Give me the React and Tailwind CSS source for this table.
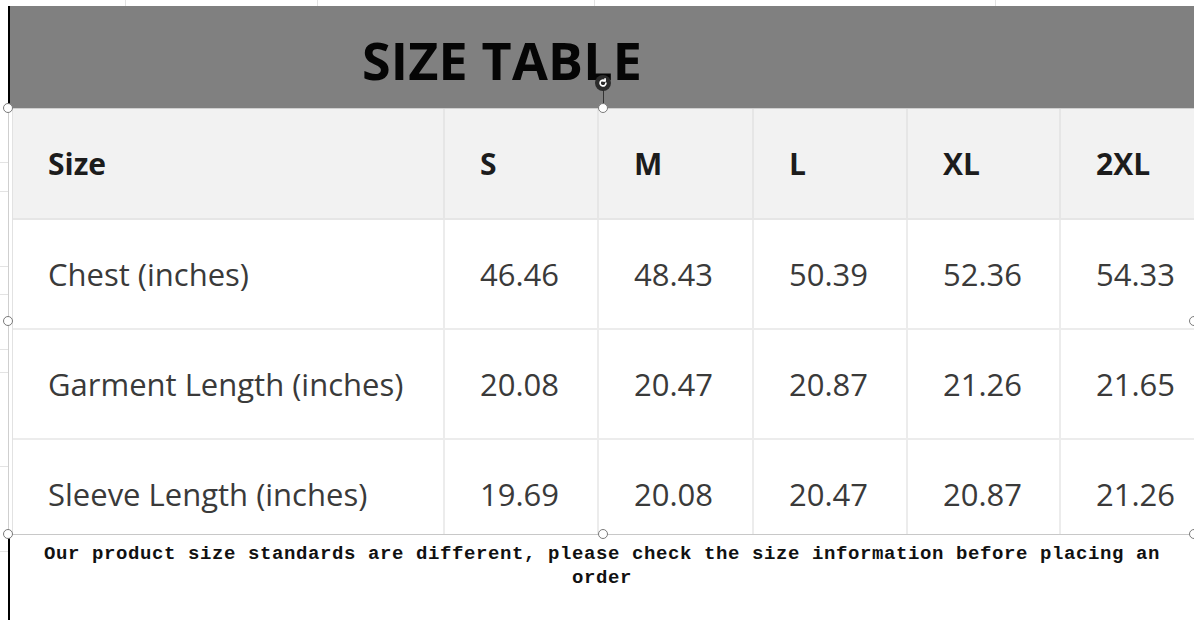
import { useState } from "react";

const columns = ["Size", "S", "M", "L", "XL", "2XL"];

const rows = [
  ["Chest (inches)", "46.46", "48.43", "50.39", "52.36", "54.33"],
  ["Garment Length (inches)", "20.08", "20.47", "20.87", "21.26", "21.65"],
  ["Sleeve Length (inches)", "19.69", "20.08", "20.47", "20.87", "21.26"],
];

const cellFont = { fontFamily: '"Open Sans", "Noto Sans", sans-serif' };

function Handle({ className }) {
  return (
    <span
      className={`absolute h-[10px] w-[10px] -translate-x-1/2 -translate-y-1/2 rounded-full border border-[#7a7a7a] bg-white ${className}`}
    />
  );
}

export default function App() {
  const [selected] = useState(true);

  return (
    <div className="relative h-[620px] w-[1194px] overflow-hidden bg-white">
      {/* sheet grid peeking out at the top */}
      <div className="flex h-[6px]">
        <div className="w-[126px] border-r border-[#e3e3e3]" />
        <div className="w-[192px] border-r border-[#e3e3e3]" />
        <div className="w-[277px] border-r border-[#e3e3e3]" />
        <div className="w-[401px] border-r border-[#e3e3e3]" />
        <div className="flex-1" />
      </div>

      <div className="flex">
        {/* left gutter of the sheet */}
        <div className="flex w-[8px] flex-col">
          <div className="h-[157px] border-b border-[#e3e3e3]" />
          <div className="h-[29px] border-b border-[#e3e3e3]" />
          <div className="h-[75px] border-b border-[#e3e3e3]" />
          <div className="h-[28px] border-b border-[#e3e3e3]" />
          <div className="h-[55px] border-b border-[#e3e3e3]" />
          <div className="h-[23px] border-b border-[#e3e3e3]" />
          <div className="h-[94px] border-b border-[#e3e3e3]" />
          <div className="h-[85px] border-b border-[#e3e3e3]" />
        </div>

        {/* the text box */}
        <div className="w-[1186px] shrink-0">
          <div className="flex h-[102px] items-start border-l-2 border-black bg-[#808080] pl-[352px]">
            <h1
              className="mt-[28px] text-[52px] font-bold leading-none tracking-[0.2px] text-[#050505]"
              style={cellFont}
            >
              SIZE TABLE
            </h1>
          </div>

          <div className="h-[426px] overflow-hidden border-t border-l border-[#cfcfcf] pl-[3px]">
            <div className="grid w-[1210px] grid-cols-[432px_154px_155px_154px_153px_162px] border-l border-[#e2e2e2]" style={cellFont}>
              {columns.map((col) => (
                <div
                  key={col}
                  className="flex h-[111px] items-center border-r-2 border-b-2 border-[#e6e6e6] bg-[#f2f2f2] pl-[35px] text-[30px] font-bold text-[#1c1c1c]"
                >
                  {col}
                </div>
              ))}
              {rows.map((row) =>
                row.map((cell, i) => (
                  <div
                    key={row[0] + i}
                    className="flex h-[110px] items-center border-r-2 border-b-2 border-[#ececec] bg-white pl-[35px] text-[31px] text-[#3a3a3a]"
                  >
                    {cell}
                  </div>
                ))
              )}
            </div>
          </div>

          <div className="h-[86px] border-t border-l-2 border-t-[#c8c8c8] border-l-black pt-[7px]">
            <p
              className="px-[14px] text-center text-[19px] font-bold leading-[24px] tracking-[0.6px] text-[#111]"
              style={{ fontFamily: '"Liberation Mono", "DejaVu Sans Mono", monospace' }}
            >
              Our product size standards are different, please check the size information before placing an order
            </p>
          </div>
        </div>
      </div>

      {selected && (
        <>
          <span className="absolute left-[603px] top-[90px] h-[14px] w-px bg-[#333]" />
          <span className="absolute left-[603px] top-[83px] flex h-[16px] w-[16px] -translate-x-1/2 -translate-y-1/2 items-center justify-center rounded-full bg-[#2b2b2b]">
            <svg width="10" height="10" viewBox="0 0 24 24" fill="none" stroke="white" strokeWidth="4" strokeLinecap="round">
              <path d="M19 12a7 7 0 1 1-3-5.7" />
              <path d="M17 2v5h-5" />
            </svg>
          </span>
          <Handle className="left-[8px] top-[108px]" />
          <Handle className="left-[603px] top-[108px]" />
          <Handle className="left-[8px] top-[321px]" />
          <Handle className="left-[1194px] top-[321px]" />
          <Handle className="left-[8px] top-[534px]" />
          <Handle className="left-[603px] top-[534px]" />
          <Handle className="left-[1194px] top-[534px]" />
        </>
      )}
    </div>
  );
}
